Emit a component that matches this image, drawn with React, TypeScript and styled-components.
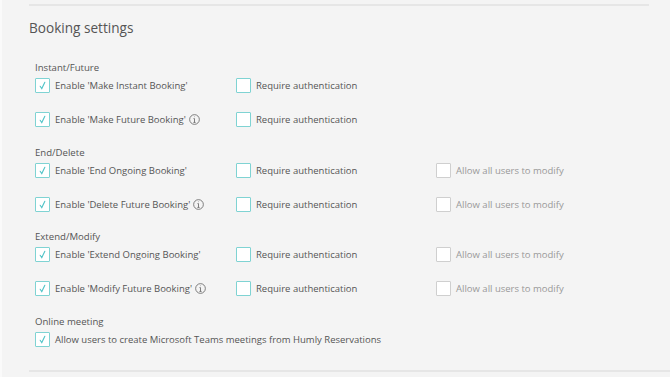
import styled, { createGlobalStyle } from 'styled-components';

const GlobalStyle = createGlobalStyle`
  html, body {
    margin: 0;
    padding: 0;
    background: #f4f4f4;
  }
  body {
    font-family: 'Open Sans', 'Noto Sans', sans-serif;
    color: #555;
  }
`;

type Option = { label: string; checked?: boolean; disabled?: boolean; info?: boolean };
type Row = Option[];
type Section = { title: string; rows: Row[] };

const sections: Section[] = [
  {
    title: 'Instant/Future',
    rows: [
      [{ label: "Enable 'Make Instant Booking'", checked: true }, { label: 'Require authentication' }],
      [{ label: "Enable 'Make Future Booking'", checked: true, info: true }, { label: 'Require authentication' }],
    ],
  },
  {
    title: 'End/Delete',
    rows: [
      [
        { label: "Enable 'End Ongoing Booking'", checked: true },
        { label: 'Require authentication' },
        { label: 'Allow all users to modify', disabled: true },
      ],
      [
        { label: "Enable 'Delete Future Booking'", checked: true, info: true },
        { label: 'Require authentication' },
        { label: 'Allow all users to modify', disabled: true },
      ],
    ],
  },
  {
    title: 'Extend/Modify',
    rows: [
      [
        { label: "Enable 'Extend Ongoing Booking'", checked: true },
        { label: 'Require authentication' },
        { label: 'Allow all users to modify', disabled: true },
      ],
      [
        { label: "Enable 'Modify Future Booking'", checked: true, info: true },
        { label: 'Require authentication' },
        { label: 'Allow all users to modify', disabled: true },
      ],
    ],
  },
  {
    title: 'Online meeting',
    rows: [[{ label: 'Allow users to create Microsoft Teams meetings from Humly Reservations', checked: true }]],
  },
];

const InfoIcon = () => (
  <svg width="11" height="11" viewBox="0 0 12 12" fill="none" stroke="#666" strokeWidth="0.9">
    <circle cx="6" cy="6" r="5.3" />
    <line x1="6" y1="5" x2="6" y2="9.2" />
    <line x1="4.8" y1="9.2" x2="7.2" y2="9.2" />
    <line x1="4.9" y1="5" x2="6" y2="5" />
    <circle cx="6" cy="3.1" r="0.5" fill="#666" stroke="none" />
  </svg>
);

const Check = () => (
  <svg width="9" height="9" viewBox="0 0 10 10" fill="none" stroke="#4fc3c7" strokeWidth="1.2" strokeLinecap="round">
    <path d="M2.4 5.8 L4.2 8.4 L7.6 1.4" />
  </svg>
);

export default function App() {
  return (
    <>
      <GlobalStyle />
      <Page>
        <Panel>
          <Divider />
          <Title>Booking settings</Title>
          <Body>
            {sections.map((section) => (
              <SectionBlock key={section.title}>
                <SectionTitle>{section.title}</SectionTitle>
                {section.rows.map((row, i) => (
                  <OptionRow key={i}>
                    {row.map((opt) => (
                      <OptionCell key={opt.label}>
                        <Box $disabled={opt.disabled}>{opt.checked && <Check />}</Box>
                        <OptionLabel $disabled={opt.disabled}>{opt.label}</OptionLabel>
                        {opt.info && (
                          <InfoWrap>
                            <InfoIcon />
                          </InfoWrap>
                        )}
                      </OptionCell>
                    ))}
                  </OptionRow>
                ))}
              </SectionBlock>
            ))}
          </Body>
          <BottomDivider />
        </Panel>
      </Page>
    </>
  );
}

const Page = styled.div`
  width: 670px;
  height: 377px;
  overflow: hidden;
  box-sizing: border-box;
  border-left: 2px solid #fafafa;
`;

const Panel = styled.div`
  padding: 4px 0 0 27px;
  display: flex;
  flex-direction: column;
`;

const Divider = styled.div`
  width: 620px;
  height: 2px;
  background: #e6e6e6;
`;

const BottomDivider = styled.div`
  width: 645px;
  height: 2px;
  background: #e6e6e6;
  margin-top: 22px;
`;

const Title = styled.h2`
  margin: 12px 0 0;
  font-size: 13.6px;
  font-weight: 400;
  line-height: 20px;
  color: #555;
`;

const Body = styled.div`
  padding: 22px 0 0 6px;
  display: flex;
  flex-direction: column;
  gap: 16.5px;
`;

const SectionBlock = styled.div`
  display: flex;
  flex-direction: column;
`;

const SectionTitle = styled.div`
  font-size: 9.6px;
  line-height: 16px;
  color: #555;
  margin-bottom: 1px;
`;

const OptionRow = styled.div`
  display: grid;
  grid-template-columns: 201px 200px auto;
  height: 34px;
  align-items: start;

  &:last-child {
    height: 17px;
  }
`;

const OptionCell = styled.div`
  display: flex;
  align-items: center;
  height: 17px;
`;

const Box = styled.span<{ $disabled?: boolean }>`
  width: 15px;
  height: 15px;
  box-sizing: border-box;
  border: 1px solid ${(p) => (p.$disabled ? '#cfcfcf' : '#7fd3d3')};
  background: #fff;
  border-radius: 1px;
  display: flex;
  align-items: center;
  justify-content: center;
  flex-shrink: 0;
`;

const OptionLabel = styled.span<{ $disabled?: boolean }>`
  margin-left: 5px;
  font-size: 9.5px;
  white-space: nowrap;
  color: ${(p) => (p.$disabled ? '#999' : '#555')};
`;

const InfoWrap = styled.span`
  display: inline-flex;
  margin-left: 3px;
`;
